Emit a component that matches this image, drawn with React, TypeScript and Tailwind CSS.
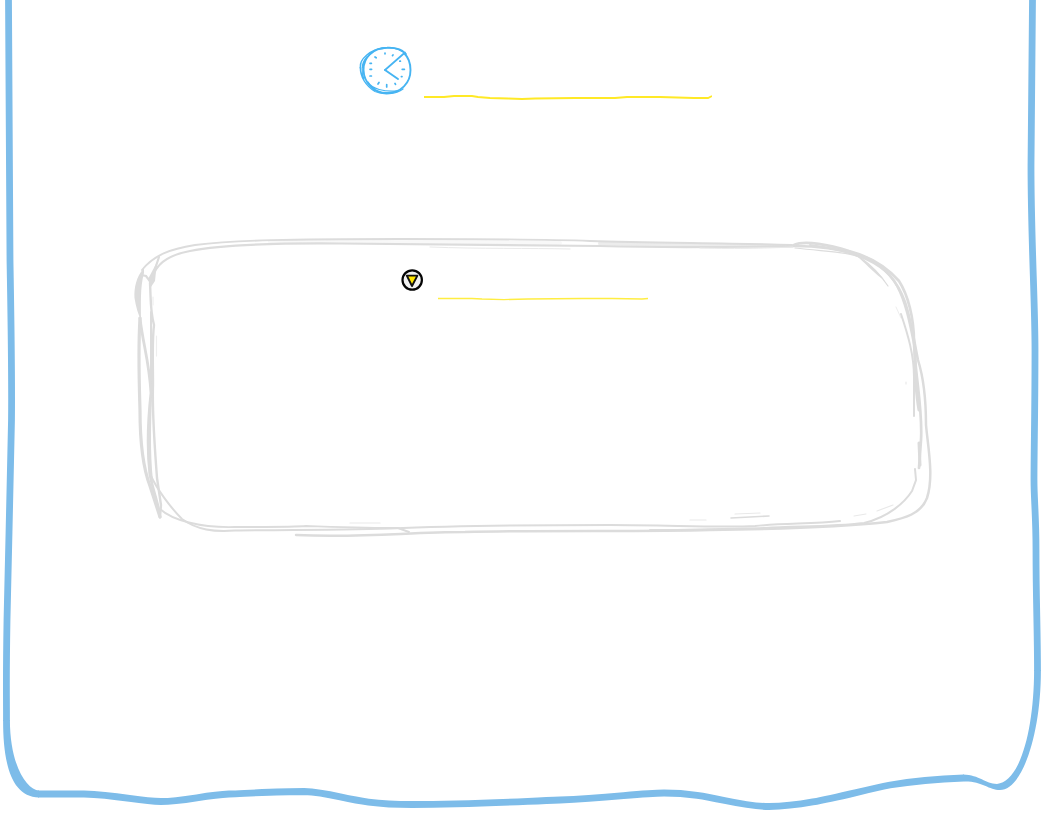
import type { ReactNode } from "react";

function PageFrame() {
  return (
    <svg
      className="pointer-events-none absolute inset-0 h-full w-full"
      viewBox="0 0 1045 827"
      preserveAspectRatio="none"
      aria-hidden="true"
    >
      <g fill="none" stroke="#7dbce9" strokeWidth="6.8">
        <path d="M8.5 0C8.5 140 9 200 10 260S12 370 11.5 420S8 560 7 620S6.5 690 6.5 721" />
        <path d="M38 794H84C120 795 138 801.5 161 801.5S205 795 229 794S280 791.5 304 791.5C340 793 350 804.500 412 804.500C470 804.500 510 802 560 800S640 793 664 793C710 793 735 806.5 769 806.5C810 806 850 793 890 785C915 781 940 779 964 778" />
        <path d="M1032.5 0C1031.5 55 1031 110 1031 165C1031 240 1035 300 1035 350C1035 410 1034 450 1034 480C1034 500 1036 515 1036 550C1036 600 1037.5 630 1037.5 671" />
      </g>
      <g fill="#7dbce9">
        <path d="M3.1 720C3 760 10 797 39 797.4V790.6C27 790 10 766 9.9 720Z" />
        <path d="M1040.9 670C1041 735 1022 790 1000 790C989 790 982 781 964 781.4L963 774.6C980 775 985 784 997 784C1020 782 1034 730 1034.1 670Z" />
      </g>
    </svg>
  );
}

function ClockIcon() {
  return (
    <svg className="h-[50px] w-[54px] shrink-0" viewBox="0 0 54 50" fill="none" stroke="#46b4f2" strokeLinecap="round" aria-hidden="true">
      <path strokeWidth="1.9" d="M48 8C44 3 36 1.5 29 1.8C15 2 5.5 11 5.5 24C6 37 16 47 29 47C43 47 52.5 37 52.5 24C52.5 17 50 11 46 7" />
      <path strokeWidth="1.3" d="M25 2.5C12 3 1.5 14 2.3 21C2 31 8 40 17 45.5C25 49 38 48.5 45 43M9 11C3 17 3 27 6 33M3 17L2 22M10 36C14 43 26 46 39 45M12 39L17 44L24 47M20 3C30 0 40 2 45 6M15 6C8 11 5 16 4 23" />
      <path strokeWidth="2" d="M27 24L40 33" />
      <path strokeWidth="1.7" d="M47 6.5L27 24" />
      <path strokeWidth="1.7" d="M27 7V7.8M35 9L34.5 9.6M17 11L18.2 11.8M12 17.3H13.4M12 23.3H13.6M12 30H13.4M21 36.5L20 38M28.7 38.5V41M37 37.5L37.5 38.4M43.4 30.6H44M44.2 23.3H46.4M41.8 15.2H42.4" />
    </svg>
  );
}

function MarkerIcon() {
  return (
    <svg className="h-6 w-6 shrink-0" viewBox="0 0 24 24" aria-hidden="true">
      <circle cx="11.2" cy="12" r="9.7" fill="#f1f1f1" stroke="#050505" strokeWidth="2.2" />
      <path d="M5.800 7.600H16.400L11 18Z" fill="#ffe500" stroke="#111" strokeWidth="1.9" strokeLinejoin="round" />
    </svg>
  );
}

function Heading({ icon, children, className }: { icon: ReactNode; children: ReactNode; className: string }) {
  return (
    <div className={`flex items-start justify-center ${className}`}>
      {icon}
      {children}
    </div>
  );
}

function CardFrame() {
  return (
    <svg
      className="pointer-events-none absolute inset-0 h-full w-full"
      viewBox="130 236 809 304"
      preserveAspectRatio="none"
      fill="none"
      stroke="#dcdcdc"
      strokeWidth="2.7"
      strokeLinecap="round"
      aria-hidden="true"
    >
      <path d="M600 243.500C680 244 740 246 792 246" stroke="#ececec" strokeWidth="4" />
      <path d="M270 241.500C340 241 420 242 560 243" stroke="#f8f8f8" strokeWidth="4" />
      <path d="M142 270C154 255 170 249 195 245C235 240 290 239 400 239C480 239 540 239 590 241C650 243 730 243 792 245" strokeWidth="1.9" />
      <path d="M153 277C156 264 169 255 190 251C225 244 280 243 340 243.500C420 245 500 245 600 246C670 248 740 247 793 246" strokeWidth="2.1" />
      <path d="M430 247C480 249 530 248 570 249M700 248C740 249 770 248 793 247" stroke="#e9e9e9" strokeWidth="1" />
      <path d="M144 268C136 277 134 288 134.500 298C136 307 138 314 141 320C141 306 140 287 144 273Z" fill="#dcdcdc" stroke="none" />
      <path d="M159 257L153 275L150.500 282L146 276L141 275" strokeWidth="2.2" />
      <path d="M157 262L148 279L151 287L155 281Z" fill="#dcdcdc" stroke="none" />
      <path d="M150 283C151 300 150 310 154 325C152 340 153 360 153 385C152 415 155 450 157 478L161 505L160 517" strokeWidth="2.4" />
      <path d="M151 312V392" strokeWidth="2" />
      <path d="M140 318C143 345 149 360 151 393C148 420 147 450 150 475C154 495 159 505 160 517" strokeWidth="2.8" />
      <path d="M151 395C147 425 147 450 149 475L153 481C150 450 151 425 152 395Z" fill="#dcdcdc" stroke="none" />
      <path d="M140 318C138 350 139 375 140 410C140 440 142 465 150 486L160 517" strokeWidth="3.2" />
      <path d="M156.500 336V356M153 297V305" stroke="#eeeeee" strokeWidth="1.2" />
      <path d="M151 476C157 489 170 507 182 519C197 530 214 532 235 530.500C285 530 340 530 390 528.500C450 526 540 525 610 525C670 525 720 528 755 526C785 523 812 524 840 521" strokeWidth="2" />
      <path d="M160 509C172 520 200 528 235 527C275 527 295 527 306 526C340 527 370 528 398 528L409 532" strokeWidth="1.9" />
      <path d="M296 535C365 538 407 532 465 532C555 530 645 532 710 530C785 529 842 527 887 522C905 518 921 514 927 498C934 477 928 447 926 425C926 400 923 376 918 360C914 340 911 320 905 302C898 283 886 267 867 258C844 249 817 246 794 246" strokeWidth="2.5" />
      <path d="M794 245C805 240 830 245 849 251C871 257 886 266 899 281C908 295 914 318 914 342C915 375 923 410 921 440L919 468" />
      <path d="M810 245C850 250 884 261 897 286C906 303 910 325 914 345" strokeWidth="2" />
      <path d="M795 248C830 252 850 252 861 258C871 265 880 274 888 286" strokeWidth="1.2" />
      <path d="M853 253C869 263 879 273 885 281C874 273 868 266 859 258Z" fill="#dcdcdc" stroke="none" />
      <path d="M896 307L901 318" stroke="#eeeeee" strokeWidth="1" />
      <path d="M901 314C908 335 914 355 914 377V416" strokeWidth="2" />
      <path d="M915 350C915 380 916 394 919 410M919 443L920 465" strokeWidth="3" />
      <path d="M915 469L916 480L912 491C905 502 889 517 864 523C830 527 795 526 765 528C720 529 690 530 650 530" strokeWidth="2" />
      <path d="M854 516L866 514M877 511L893 505M690 520H706M735 514L760 513M350 523H380M906 382V384" stroke="#e9e9e9" strokeWidth="1.2" />
      <path d="M731 518L769 516" strokeWidth="1.6" />
    </svg>
  );
}

export default function App() {
  return (
    <main className="relative min-h-screen overflow-hidden bg-white pt-[46px] font-['Liberation_Sans',sans-serif]">
      <PageFrame />
      <header>
        <Heading icon={<ClockIcon />} className="gap-3 pl-[25px]">
          <svg className="mt-[46px] h-2 w-[288px]" viewBox="0 0 288 8" fill="none" aria-hidden="true">
            <path d="M0 5H20L30 4H48L54 5L66 6L84 6.500L98 7L111 6.500L151 6H191L203 5H236L270 6H284L288 4" stroke="#ffe926" strokeWidth="1.8" />
          </svg>
        </Heading>
      </header>
      <div className="mt-[136px] pr-[106px] pl-[130px]">
        <section className="relative h-[304px] pt-8">
          <CardFrame />
          <Heading icon={<MarkerIcon />} className="gap-[13px] pr-[21px]">
            <svg className="mt-[26px] h-2 w-[210px]" viewBox="0 0 210 8" fill="none" aria-hidden="true">
              <path d="M0 4.500H18L34 4.500L44 5L66 5.600L90 5L144 4.500H174L204 5L210 4.500" stroke="#ffed42" strokeWidth="1.3" />
            </svg>
          </Heading>
        </section>
      </div>
    </main>
  );
}
